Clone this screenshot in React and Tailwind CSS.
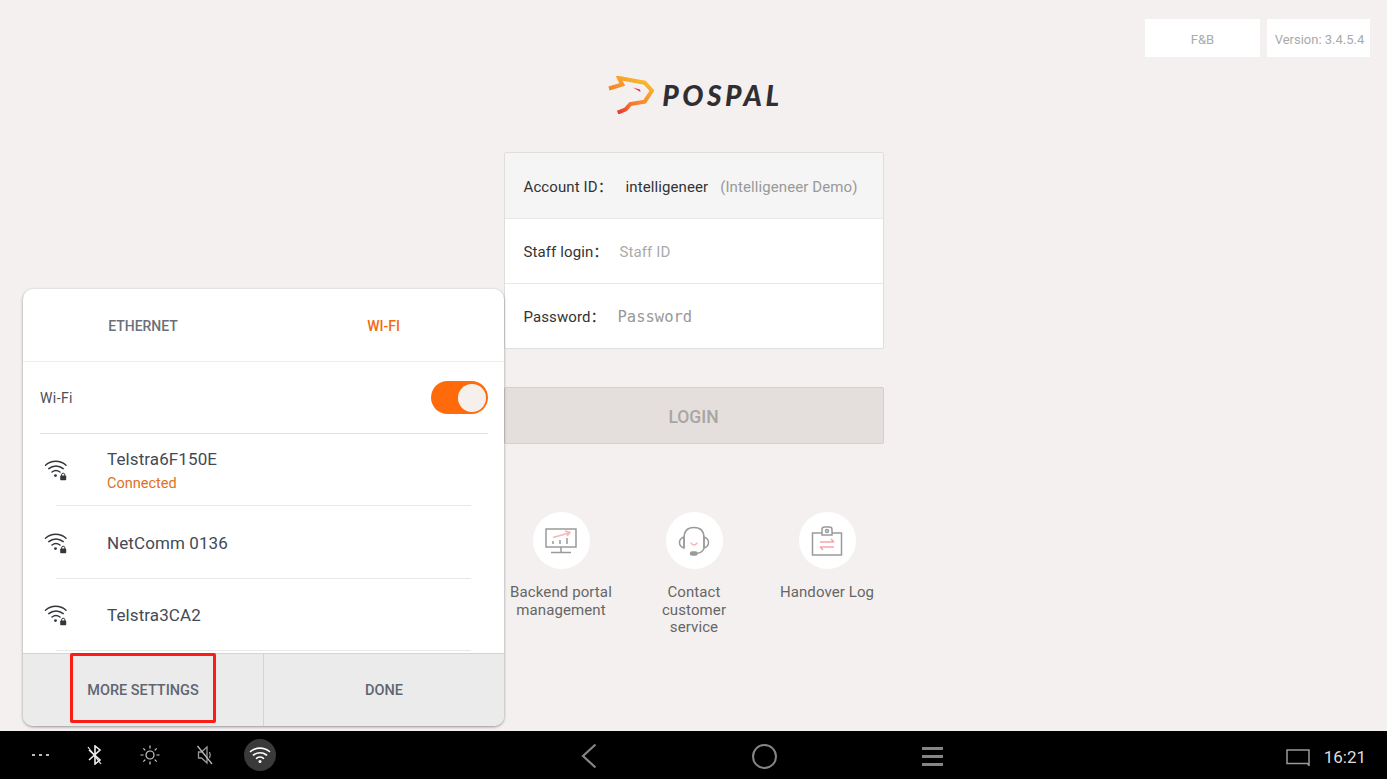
import { useState } from 'react';

const FONT = { fontFamily: 'Roboto, "Noto Sans CJK SC", sans-serif' };

function WifiLock() {
  return (
    <svg width="24" height="22" viewBox="0 0 24 22" fill="none" stroke="#33363c" strokeWidth="1.5" strokeLinecap="round">
      <path d="M1.500 6.200C7.500 1 16 1 22 6.200" />
      <path d="M4.800 9.600C9 6 15 6 19.200 9.600" />
      <path d="M8 13C10.200 11.200 13.600 11.200 16 13" />
      <circle cx="11.500" cy="16.600" r="1.400" fill="#33363c" stroke="none" />
      <rect x="16.200" y="16.600" width="6" height="4.600" rx="0.800" fill="#33363c" stroke="none" />
      <path d="M17.600 16.800v-1a1.600 1.600 0 0 1 3.200 0v1" strokeWidth="1" />
    </svg>
  );
}

function Logo() {
  return (
    <div className="flex items-center justify-center h-[38px]">
      <svg width="46" height="38" viewBox="0 0 46 38" fill="none">
        <defs>
          <linearGradient id="lg" x1="30" y1="0" x2="8" y2="38" gradientUnits="userSpaceOnUse">
            <stop offset="0" stopColor="#f9bb2c" />
            <stop offset="0.55" stopColor="#f6842c" />
            <stop offset="1" stopColor="#e8303a" />
          </linearGradient>
        </defs>
        <path
          d="M1 12.500L14.300 8.500L11 2L36.700 6.700L44 14.700L36.700 25.700L22.300 28L17.700 33.300L9.700 36.700"
          stroke="url(#lg)"
          strokeWidth="4"
          strokeLinejoin="miter"
        />
        <path d="M25 11.500L32 13.500L32.500 16Z" fill="#e8303a" />
      </svg>
      <span
        className="ml-[8px] mr-[-4px] text-[28px] leading-none font-black italic tracking-[3.500px] text-[#2f2f33]"
        style={{ fontFamily: 'Lato, sans-serif' }}
      >
        POSPAL
      </span>
    </div>
  );
}

function MonitorIcon() {
  return (
    <svg width="32" height="26" viewBox="0 0 32 26" fill="none" stroke="#9a9a9a" strokeWidth="1.500">
      <rect x="1" y="1" width="30" height="18" />
      <path d="M16 19v5M6 24.500h20" />
      <path d="M8 13v3M15 12v4M22 10v6" />
      <path d="M8 9.500L24 5M20 3l5 1.500L22 8" stroke="#f7b5b5" />
    </svg>
  );
}

function HeadsetIcon() {
  return (
    <svg width="32" height="30" viewBox="0 0 32 30" fill="none" stroke="#9a9a9a" strokeWidth="1.500" strokeLinecap="round">
      <path d="M6 21V12C6 5 10 1.500 16 1.500S26 5 26 12v9" />
      <path d="M6 11C3 12 1.500 14 1.500 16.500S3 21 6 22zM26 11c3 1 4.500 3 4.500 5.500S29 21 26 22z" />
      <path d="M26 22c-0.500 3-3.500 5-8 5.500" />
      <rect x="12.500" y="26" width="6.500" height="3" rx="1.500" fill="#9a9a9a" />
      <path d="M13 17c1.200 2.500 4.800 2.500 6 0" stroke="#f7b5b5" />
    </svg>
  );
}

function BadgeIcon() {
  return (
    <svg width="32" height="30" viewBox="0 0 32 30" fill="none" stroke="#9a9a9a" strokeWidth="1.500">
      <path d="M11 7H1.500V29H30.500V7H21" />
      <path d="M11 9V3.500C11 2 12 1 13.500 1h5C20 1 21 2 21 3.500V9z" />
      <circle cx="16" cy="5" r="1.500" />
      <path d="M9 16h14M20 13l3 3M23 21H9M12 24l-3-3" stroke="#f7a5a5" />
    </svg>
  );
}

function QuickLink({ icon, label }) {
  return (
    <div className="w-[133px] shrink-0 flex flex-col items-center">
      <div className="w-[57px] h-[57px] rounded-full bg-white flex items-center justify-center">{icon}</div>
      <div className="mt-[15px] px-[14px] text-center text-[15px] leading-[17.500px] tracking-[0.1px] text-[#666666]">{label}</div>
    </div>
  );
}

function NetworkRow({ name, status, height }) {
  return (
    <div className="relative flex items-center" style={{ height }}>
      <div className="ml-[21px] w-[63px] shrink-0">
        <WifiLock />
      </div>
      <div className={status ? 'pt-[1px]' : ''}>
        <div className="text-[17px] leading-[20px] tracking-[0.1px] text-[#444a55]">{name}</div>
        {status && <div className="mt-[7px] text-[14.500px] leading-[16px] text-[#e0701f]">{status}</div>}
      </div>
      <div className="absolute bottom-0 left-[33px] right-[33px] h-px bg-[#e8e8e8]" />
    </div>
  );
}

function StatusBar() {
  return (
    <div className="h-[48px] bg-black flex items-center">
      <div className="w-[278px] flex items-center shrink-0">
        <div className="w-[80px] flex justify-center gap-[4px]">
          <span className="w-[3px] h-[2px] bg-[#bbbbbb]" />
          <span className="w-[3px] h-[2px] bg-[#bbbbbb]" />
          <span className="w-[3px] h-[2px] bg-[#bbbbbb]" />
        </div>
        <div className="w-[30px] flex justify-center">
          <svg width="16" height="20" viewBox="0 0 16 20" fill="none" stroke="#eeeeee" strokeWidth="1.600">
            <path d="M2 5l11 10-5 4V1l5 4L2 15" />
            <path d="M1 2l13 17" stroke="#eeeeee" strokeWidth="1.200" />
          </svg>
        </div>
        <div className="ml-[25px] w-[30px] flex justify-center">
          <svg width="20" height="20" viewBox="0 0 20 20" fill="none" stroke="#cccccc" strokeWidth="1.200">
            <circle cx="10" cy="10" r="4" />
            <path d="M10 0.500v3M10 16.500v3M0.500 10h3M16.500 10h3M3.300 3.300l2 2M14.700 14.700l2 2M16.700 3.300l-2 2M5.300 14.700l-2 2" />
          </svg>
        </div>
        <div className="ml-[25px] w-[30px] flex justify-center">
          <svg width="16" height="20" viewBox="0 0 16 20" fill="none" stroke="#999999" strokeWidth="1.300">
            <path d="M1.500 7v6h3L10 18V2L4.500 7z" />
            <path d="M12.500 7c1 2 1 4 0 6" />
            <path d="M0.500 1L15 19" stroke="#bbbbbb" />
          </svg>
        </div>
        <div className="ml-[24px] w-[32px] h-[32px] rounded-full bg-[#3a3a3a] flex items-center justify-center">
          <svg width="22" height="18" viewBox="0 0 22 18" fill="none" stroke="#ffffff" strokeWidth="1.600" strokeLinecap="round">
            <path d="M1.500 5.500C7 1 15 1 20.500 5.500" />
            <path d="M4.500 9C8.300 6 13.700 6 17.500 9" />
            <path d="M7.500 12.300C9.700 10.700 12.300 10.700 14.500 12.300" />
            <circle cx="11" cy="15.500" r="1.500" fill="#ffffff" stroke="none" />
          </svg>
        </div>
      </div>

      {/* nav buttons */}
      <svg className="ml-[302px] mt-[2px] shrink-0" width="18" height="26" viewBox="0 0 18 26" fill="none" stroke="#858585" strokeWidth="2.200">
        <path d="M15.500 1.500L3 13l12.500 11.500" />
      </svg>
      <div className="ml-[154px] mt-[2px] w-[25px] h-[25px] shrink-0 rounded-full border-[2.500px] border-[#858585]" />
      <div className="ml-[145px] mt-[2px] flex flex-col gap-[5px] shrink-0">
        <span className="w-[21px] h-[3px] bg-[#858585]" />
        <span className="w-[21px] h-[3px] bg-[#858585]" />
        <span className="w-[21px] h-[3px] bg-[#858585]" />
      </div>

      <div className="ml-auto mt-[4px] flex items-center pr-[21px]">
        <svg width="24" height="17" viewBox="0 0 24 17" fill="none" stroke="#999999" strokeWidth="1.500">
          <path d="M1 1h22v15.500L21.500 14.500H1z" />
        </svg>
        <span className="ml-[14px] text-[17px] leading-none text-[#dddddd]">16:21</span>
      </div>
    </div>
  );
}

export default function App() {
  const [tab] = useState('wifi');

  return (
    <div className="w-[1387px] h-[779px] overflow-hidden relative bg-[#f4f0ef]" style={FONT}>
      <div className="h-[731px] pt-[19px]">
        {/* top right tags */}
        <div className="flex justify-end gap-[7px] pr-[17px]">
          <div className="w-[115px] h-[38px] pt-[3px] bg-white flex items-center justify-center text-[13px] text-[#aaaaaa]">F&amp;B</div>
          <div className="w-[103px] h-[38px] pt-[3px] pl-[2px] bg-white flex items-center justify-center text-[13px] text-[#aaaaaa]">Version: 3.4.5.4</div>
        </div>

        <div className="mt-[19px]">
          <Logo />
        </div>

        {/* login form */}
        <div className="w-[380px] mx-auto mt-[38px]">
          <div className="border border-[#dedede] rounded-[2px] bg-white overflow-hidden">
            <div className="h-[66px] pt-[3px] bg-[#f5f5f5] flex items-center pl-[19px] text-[15px] tracking-[0.1px] border-b border-[#e8e8e8]">
              <span className="w-[102px] shrink-0 text-[#333333]">Account ID：</span>
              <span className="text-[#333333]">intelligeneer</span>
              <span className="ml-[12px] text-[#999999]">(Intelligeneer Demo)</span>
            </div>
            <div className="h-[65px] pt-[2px] flex items-center pl-[19px] text-[15px] tracking-[0.1px] border-b border-[#e8e8e8]">
              <span className="w-[96px] shrink-0 text-[#333333]">Staff login：</span>
              <span className="text-[#aaaaaa]">Staff ID</span>
            </div>
            <div className="h-[64px] pt-[3px] flex items-center pl-[19px] text-[15px] tracking-[0.1px]">
              <span className="w-[94px] shrink-0 text-[#333333]">Password：</span>
              <span className="text-[#999999] text-[15.500px] tracking-normal" style={{ fontFamily: '"DejaVu Sans Mono", monospace' }}>Password</span>
            </div>
          </div>

          <button className="mt-[38px] w-full h-[57px] pt-[4px] bg-[#e4dfdd] border border-[#d5d0ce] rounded-[2px] text-[17.500px] font-medium text-[#a9a5a3]">
            LOGIN
          </button>

          <div className="mt-[68px] ml-[1px] flex justify-center">
            <QuickLink icon={<MonitorIcon />} label="Backend portal management" />
            <QuickLink icon={<HeadsetIcon />} label="Contact customer service" />
            <QuickLink icon={<BadgeIcon />} label="Handover Log" />
          </div>
        </div>
      </div>

      {/* network popover */}
      <div className="absolute left-[23px] top-[289px] w-[481px] h-[437px] rounded-[10px] bg-white overflow-hidden shadow-[0_1px_3px_rgba(0,0,0,0.4)] flex flex-col">
        <div className="h-[73px] pt-[2px] shrink-0 flex items-center border-b border-[#ececec] text-[14px] font-medium">
          <div className="w-[240px] text-center text-[#6b7078]">ETHERNET</div>
          <div className={`w-[241px] text-center ${tab === 'wifi' ? 'text-[#f26a0f]' : ''}`}>WI-FI</div>
        </div>
        <div className="ml-[17px] mr-[16px] h-[72px] shrink-0 flex items-center justify-between border-b border-[#e2e2e2]">
          <span className="pt-[2px] text-[14px] tracking-[0.4px] text-[#4a4f58]">Wi-Fi</span>
          <div className="w-[57px] h-[33px] rounded-full bg-[#ff6a0a] flex items-center justify-end pr-[2px]">
            <div className="w-[28px] h-[28px] rounded-full bg-[#f5f0ec]" />
          </div>
        </div>
        <div className="flex-1 overflow-hidden">
          <NetworkRow name="Telstra6F150E" status="Connected" height={72} />
          <NetworkRow name="NetComm 0136" height={73} />
          <NetworkRow name="Telstra3CA2" height={72} />
        </div>
        <div className="h-[73px] pt-[2px] shrink-0 bg-[#ebebeb] border-t border-[#d4d4d4] flex text-[14.500px] font-medium text-[#5f6672]">
          <div className="w-[241px] mt-[-2px] pt-[2px] flex items-center justify-center border-r border-[#d4d4d4]">MORE SETTINGS</div>
          <div className="flex-1 flex items-center justify-center">DONE</div>
        </div>
      </div>

      {/* highlight around more settings */}
      <div className="absolute left-[70px] top-[653px] w-[146px] h-[70px] border-[3px] border-[#fa1e14] rounded-[2px]" />

      <StatusBar />
    </div>
  );
}
